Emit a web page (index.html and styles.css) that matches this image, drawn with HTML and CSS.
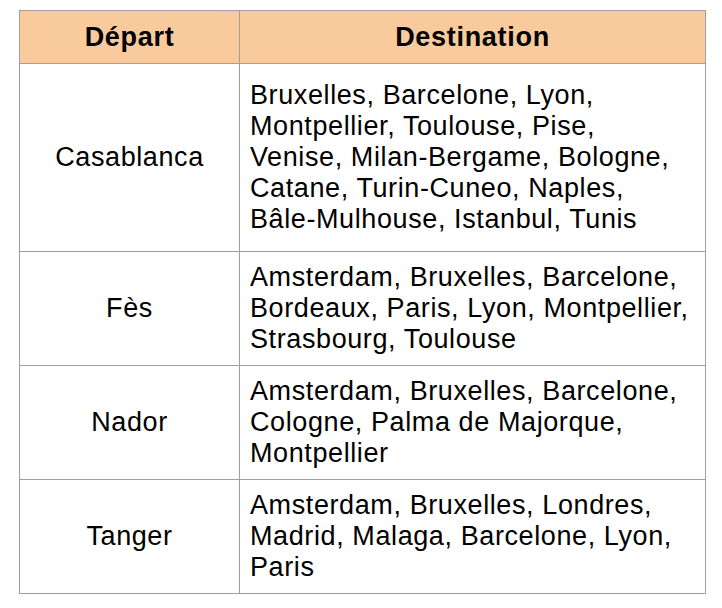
FILE: index.html
```html
<!DOCTYPE html>
<html lang="fr">
<head>
<meta charset="utf-8">
<title>Départs et destinations</title>
<link rel="stylesheet" href="styles.css">
</head>
<body>
<table class="routes">
  <colgroup>
    <col class="col-from">
    <col class="col-to">
  </colgroup>
  <thead>
    <tr class="head-row">
      <th>Départ</th>
      <th>Destination</th>
    </tr>
  </thead>
  <tbody>
    <tr class="row-tall">
      <td class="from">Casablanca</td>
      <td class="to">Bruxelles, Barcelone, Lyon,<br>Montpellier, Toulouse, Pise,<br>Venise, Milan-Bergame, Bologne,<br>Catane, Turin-Cuneo, Naples,<br>Bâle-Mulhouse, Istanbul, Tunis</td>
    </tr>
    <tr class="row">
      <td class="from">Fès</td>
      <td class="to">Amsterdam, Bruxelles, Barcelone,<br>Bordeaux, Paris, Lyon, Montpellier,<br>Strasbourg, Toulouse</td>
    </tr>
    <tr class="row">
      <td class="from">Nador</td>
      <td class="to">Amsterdam, Bruxelles, Barcelone,<br>Cologne, Palma de Majorque,<br>Montpellier</td>
    </tr>
    <tr class="row">
      <td class="from">Tanger</td>
      <td class="to">Amsterdam, Bruxelles, Londres,<br>Madrid, Malaga, Barcelone, Lyon,<br>Paris</td>
    </tr>
  </tbody>
</table>
</body>
</html>
```

FILE: styles.css
```css
html, body {
  margin: 0;
  background: #ffffff;
}

body {
  padding: 10px 0 0 19px;
  font-family: "Liberation Sans", Arial, sans-serif;
  color: #000000;
}

.routes {
  border-collapse: collapse;
  width: 687px;
  table-layout: fixed;
  font-size: 27px;
  line-height: 31px;
  letter-spacing: 0.6px;
}

.col-from {
  width: 220px;
}

.routes th,
.routes td {
  border: 1px solid #9f9f9f;
  padding: 0 10px;
  vertical-align: middle;
}

.head-row {
  height: 53px;
  background: #f9cb9c;
}

.routes th {
  font-weight: bold;
  text-align: center;
  letter-spacing: 0.7px;
}

.row-tall {
  height: 188px;
}

.row {
  height: 114px;
}

.from {
  text-align: center;
}

.to {
  text-align: left;
  white-space: nowrap;
  padding-left: 10px;
}
```
